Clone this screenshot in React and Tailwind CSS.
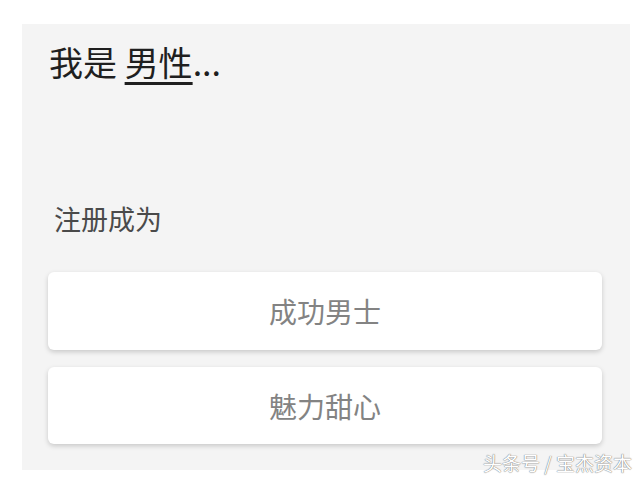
export default function App() {
    return (
        <div className="relative w-[640px] h-[480px] bg-white overflow-hidden font-['Noto_Sans_CJK_SC',sans-serif]">
            <div className="mt-6 ml-[22px] w-[608px] h-[446px] bg-[#f4f4f4] pt-[21px]">
                <h1 className="pl-[27px] text-[34px] leading-none text-[#1f1f1f]">
                    我是 <span className="underline underline-offset-[6px] decoration-[3px]">男性</span>...
                </h1>
                <p className="mt-[126px] pl-[32px] text-[27px] leading-none text-[#4a4a4a]">注册成为</p>
                <div className="mt-[40px] px-[26px] flex flex-col gap-[17px]">
                    <button
                        type="button"
                        className="w-[554px] h-[78px] bg-white rounded-[6px] shadow-[0_2px_5px_rgba(0,0,0,0.18)] text-[28px] text-[#838383] flex items-center justify-center"
                    >
                        成功男士
                    </button>
                    <button
                        type="button"
                        className="w-[554px] h-[77px] bg-white rounded-[6px] shadow-[0_2px_5px_rgba(0,0,0,0.18)] text-[28px] text-[#838383] flex items-center justify-center"
                    >
                        魅力甜心
                    </button>
                </div>
            </div>
            {/* watermark */}
            <div className="absolute right-[8px] top-[453px] text-[19px] leading-none text-white [text-shadow:0_0_1px_#777,0_0_1px_#777]">
                头条号 / 宝杰资本
            </div>
        </div>
    );
}
